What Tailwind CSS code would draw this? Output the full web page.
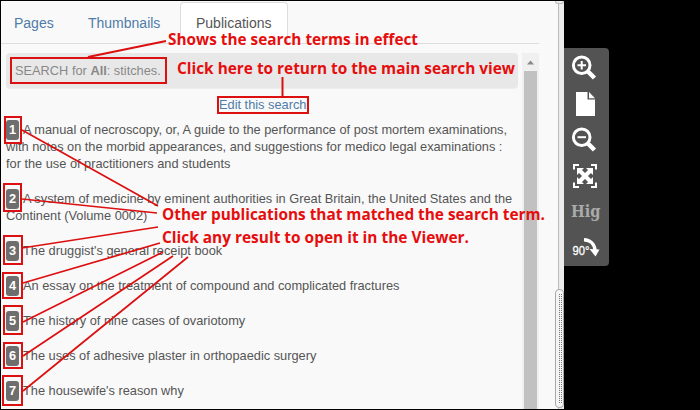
<!DOCTYPE html>
<html lang="en">
<head>
<meta charset="utf-8">
<title>Publications</title>
<script src="https://cdn.jsdelivr.net/npm/@tailwindcss/browser@4"></script>
</head>
<body class="relative h-[410px] w-[700px] overflow-hidden bg-black font-['Liberation_Sans',Arial,sans-serif] text-[12.8px] text-[#555]">
<div class="flex h-full pt-px pb-px pl-px">
  <main class="flex w-[557px] shrink-0 flex-col bg-[#f9f9f9]">
    <nav class="flex h-[43px] w-[538px] shrink-0 items-end border-b border-[#ddd] text-sm leading-5 text-[#4f7ca8]">
      <a class="h-[30px] w-[74px] pl-[13px]">Pages</a>
      <a class="h-[30px] w-[105px] pl-[13px]">Thumbnails</a>
      <a class="-mb-px h-[42px] w-[108px] rounded-t border border-b-0 border-[#ddd] bg-white pt-[10px] pl-[15px] text-[#555]">Publications</a>
    </nav>
    <div class="mt-[9px] flex min-h-0 flex-1">
      <section class="ml-[5px] w-[512px]">
        <div class="h-[36px] w-[512px] rounded-sm border-b border-[#eee] bg-[#e8e8e8] pt-[9px] pl-[9px] leading-[17px] text-[#888]">SEARCH for <b>All</b>: stitches.</div>
        <a class="mt-[7px] block pl-[213px] leading-[17px] text-[#4f7ca8]">Edit this search</a>
        <ol class="mt-[7.5px] flex flex-col gap-[17.9px] leading-[17.15px] tracking-[-0.01px] whitespace-nowrap">
          <li><span class="-my-1 mr-1 inline-block h-[20px] w-[13px] rounded-[3px] bg-[#6e6e6e] text-center leading-[20px] font-bold text-white">1</span>A manual of necroscopy, or, A guide to the performance of post mortem examinations,<br>with notes on the morbid appearances, and suggestions for medico legal examinations :<br>for the use of practitioners and students</li>
          <li><span class="-my-1 mr-1 inline-block h-[20px] w-[13px] rounded-[3px] bg-[#6e6e6e] text-center leading-[20px] font-bold text-white">2</span>A system of medicine by eminent authorities in Great Britain, the United States and the<br>Continent (Volume 0002)</li>
          <li><span class="-my-1 mr-1 inline-block h-[20px] w-[13px] rounded-[3px] bg-[#6e6e6e] text-center leading-[20px] font-bold text-white">3</span>The druggist's general receipt book</li>
          <li><span class="-my-1 mr-1 inline-block h-[20px] w-[13px] rounded-[3px] bg-[#6e6e6e] text-center leading-[20px] font-bold text-white">4</span>An essay on the treatment of compound and complicated fractures</li>
          <li><span class="-my-1 mr-1 inline-block h-[20px] w-[13px] rounded-[3px] bg-[#6e6e6e] text-center leading-[20px] font-bold text-white">5</span>The history of nine cases of ovariotomy</li>
          <li><span class="-my-1 mr-1 inline-block h-[20px] w-[13px] rounded-[3px] bg-[#6e6e6e] text-center leading-[20px] font-bold text-white">6</span>The uses of adhesive plaster in orthopaedic surgery</li>
          <li><span class="-my-1 mr-1 inline-block h-[20px] w-[13px] rounded-[3px] bg-[#6e6e6e] text-center leading-[20px] font-bold text-white">7</span>The housewife's reason why</li>
        </ol>
      </section>
      <div class="ml-[4px] flex w-[17px] flex-col items-center bg-[#f0f0f0]">
        <svg class="h-[18px] w-[17px] shrink-0" viewBox="0 0 17 18"><path d="M5 11.5 8.5 7.5 12 11.5z" fill="#888"/></svg>
        <div class="w-[13px] flex-1 bg-[#c1c1c1]"></div>
      </div>
    </div>
  </main>
  <div class="w-[6px] shrink-0 border-l border-[#bbb] bg-[#ececec]"></div>
  <aside class="mt-[47px] flex h-[218px] w-[45px] flex-col items-center rounded-r bg-[#535353]">
    <svg class="h-[218px] w-[45px]" viewBox="564 48 45 218" fill="none">
      <g stroke="#fff"><circle cx="581.7" cy="65.300" r="8.300" stroke-width="3"/><path d="m588 71.500 6.500 6.500" stroke-width="4.500"/><path d="M577.500 65.200h8.500M581.700 61v8.500" stroke-width="2"/>
      <circle cx="581.7" cy="137.300" r="8.300" stroke-width="3"/><path d="m588 143.500 6.500 6.500" stroke-width="4.500"/><path d="M577.500 137.200h8.500" stroke-width="2"/></g>
      <path d="M576 92h11.500v7.500h7.500V116h-19z" fill="#fff"/><path d="m589 92 6 6.300h-6z" fill="#fff"/>
      <path d="M574 169.500v-4.500h5M591 165h5v4.500M596 182.500v4.500h-5M579 187h-5v-4.500" stroke="#fff" stroke-width="2"/>
      <path d="m579.500 170.500 11 11m0-11-11 11" stroke="#fff" stroke-width="4.200"/>
      <path d="M577 168h7l-7 7zM593 168v7l-7-7zM577 184v-7l7 7zM593 184h-7l7-7z" fill="#fff"/>
      <text x="571" y="217" fill="#aaa" font-family="DejaVu Serif,serif" font-weight="700" font-size="17" textLength="29.500" lengthAdjust="spacingAndGlyphs">Hig</text>
      <text x="572.500" y="255" fill="#fff" stroke="#fff" stroke-width=".3" font-family="Liberation Sans,sans-serif" font-size="13.500" textLength="17" lengthAdjust="spacingAndGlyphs">90°</text>
      <path d="M584 239.800c6 .2 10.500 4 11 10.500" stroke="#fff" stroke-width="3.500"/><path d="m589.500 249 10 .5-4 7z" fill="#fff"/>
    </svg>
  </aside>
</div>
<div class="absolute top-[1px] left-[555px] h-[3px] w-[9px] rounded-b-sm border border-t-0 border-[#bbb] bg-[#eee]"></div>
<div class="absolute top-[289px] left-[555px] h-[119px] w-[9px] rounded-sm border border-[#aaa] bg-[#f4f4f4]">
  <svg class="h-full w-full" viewBox="0 0 7 117"><path d="M3.500 4v110M5.500 4v110" stroke="#777" stroke-dasharray="1 1" fill="none"/></svg>
</div>
<svg class="absolute inset-0 h-[410px] w-[700px]" viewBox="0 0 700 410" fill="none">
  <g stroke="#dc1010" stroke-width="2">
    <path d="M11 58h155v25H11zM218 97h90v16h-90zM5 117h16v26H5zM4 184h17v27H4zM4 236h18v28H4zM3 273h19v25H3zM4 306h18v28H4zM4 343h18v25H4zM3 376h19v29H3z"/>
    <path d="M88 57 166 41M282.500 77v20"/>
    <path d="M22 130 158 206M22 199l135 14M22 248l136-21M23 283l137-40M23 322l140-70M23 356l150-100M23 391 188 257" stroke-width="1.700"/>
  </g>
  <g fill="#e60d0d" font-family="Open Sans,sans-serif" font-weight="700" font-size="16">
    <text x="168" y="44.500" textLength="250" lengthAdjust="spacingAndGlyphs">Shows the search terms in effect</text>
    <text x="177" y="74" textLength="338" lengthAdjust="spacingAndGlyphs">Click here to return to the main search view</text>
    <text x="162" y="220" textLength="383" lengthAdjust="spacingAndGlyphs">Other publications that matched the search term.</text>
    <text x="162" y="243" textLength="307" lengthAdjust="spacingAndGlyphs">Click any result to open it in the Viewer.</text>
  </g>
</svg>
</body>
</html>
